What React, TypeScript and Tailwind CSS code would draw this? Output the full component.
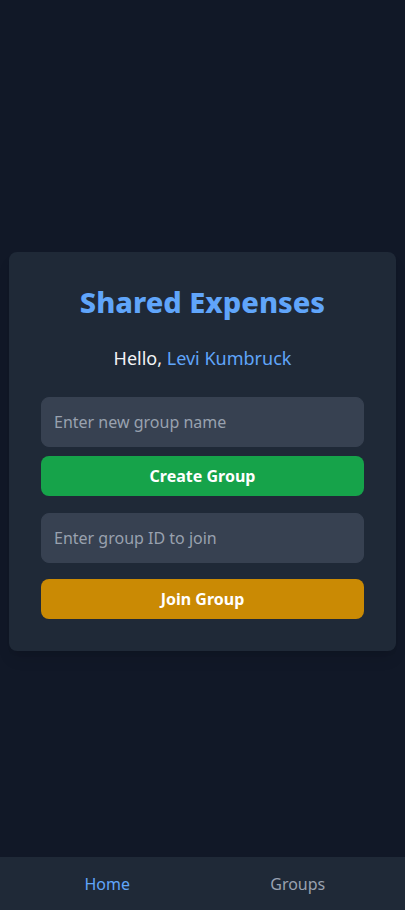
export default function App() {
	return (
		<div
			className="min-h-screen bg-[#111827] text-white"
			style={{ fontFamily: '"Noto Sans", "Open Sans", sans-serif' }}
		>
			<main className="flex min-h-screen items-center justify-center px-[9px] pb-[7px]">
				<div className="w-full rounded-lg bg-[#1f2937] p-8 shadow-lg">
					{/* Header */}
					<h1 className="mb-6 text-center text-[29px] leading-9 font-extrabold text-[#60a5fa]">
						Shared Expenses
					</h1>
					<p className="mb-[25px] text-center text-lg text-gray-100">
						Hello, <span className="text-[#60a5fa]">Levi Kumbruck</span>
					</p>

					{/* Create */}
					<input
						type="text"
						placeholder="Enter new group name"
						className="mb-[9px] block h-[50px] w-full rounded-lg border border-[#374151] bg-[#374151] px-3 text-base text-white placeholder-gray-400 outline-none"
					/>
					<button
						type="button"
						className="block h-10 w-full rounded-lg bg-[#16a34a] text-base font-bold text-white"
					>
						Create Group
					</button>

					{/* Join */}
					<input
						type="text"
						placeholder="Enter group ID to join"
						className="mt-[17px] mb-4 block h-[50px] w-full rounded-lg border border-[#374151] bg-[#374151] px-3 text-base text-white placeholder-gray-400 outline-none"
					/>
					<button
						type="button"
						className="block h-10 w-full rounded-lg bg-[#ca8a04] text-base font-bold text-white"
					>
						Join Group
					</button>
				</div>
			</main>

			{/* Bottom nav */}
			<nav className="fixed bottom-0 left-0 right-0 flex h-[53px] items-center bg-[#1f2937] px-3">
				<button type="button" className="flex-1 text-base text-[#60a5fa]">
					Home
				</button>
				<button type="button" className="flex-1 text-base text-gray-400">
					Groups
				</button>
			</nav>
		</div>
	);
}
